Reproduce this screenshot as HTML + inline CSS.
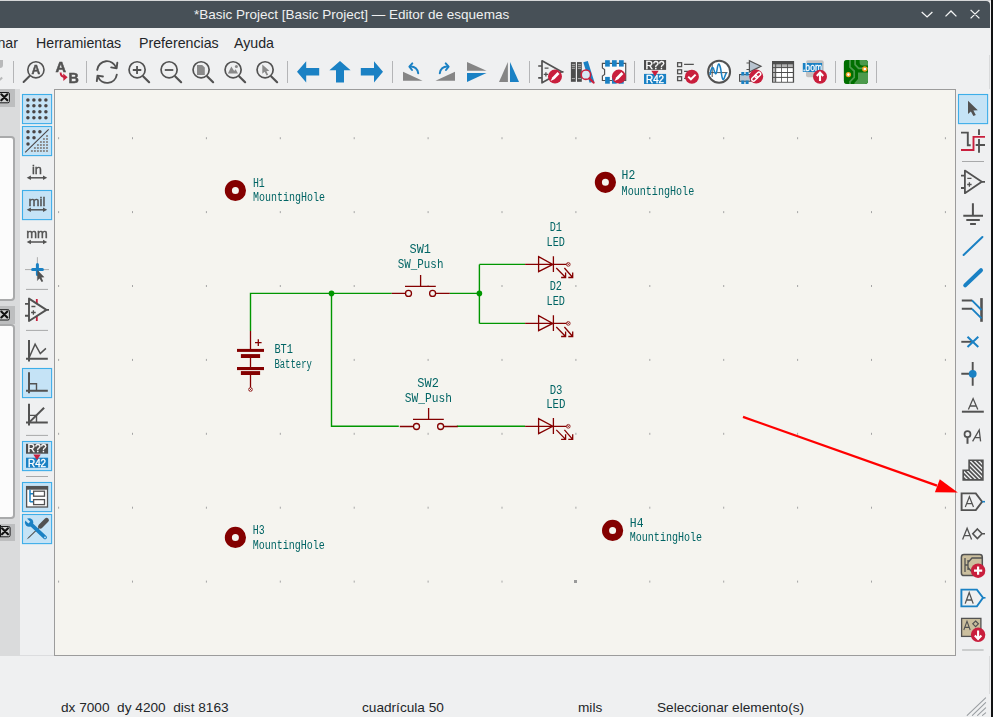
<!DOCTYPE html>
<html><head><meta charset="utf-8">
<style>
*{margin:0;padding:0;box-sizing:border-box}
html,body{width:993px;height:717px;overflow:hidden;background:#eff0f1;font-family:"Liberation Sans",sans-serif;color:#232629}
.a{position:absolute}
#title{left:0;top:1px;width:990px;height:27px;background:#475057;border-top-right-radius:4px}
#top0{left:0;top:0;width:993px;height:1px;background:#d6d7d8}
#rstrip{left:990.5px;top:0;width:3px;height:717px;background:#111213}
#ttext{left:194px;top:7px;color:#eff0f1;font-size:13.5px;white-space:nowrap}
.menu{top:35px;font-size:14.2px;white-space:nowrap}
.sep{width:1px;background:#b0b2b4}
.status{top:700px;font-size:13.65px;white-space:nowrap}
svg{position:absolute;overflow:visible}
.btn{position:absolute;width:30px;height:30px;background:#c7e3f6;border:1px solid #3daee9;border-radius:1px}
</style></head><body>
<div id="top0" class="a"></div>
<div id="title" class="a"></div>
<div id="ttext" class="a">*Basic Project [Basic Project] — Editor de esquemas</div>
<div id="rstrip" class="a"></div>

<!-- menu -->
<div class="a menu" style="left:-80px;width:98px;text-align:right">Inspeccionar</div>
<div class="a menu" style="left:36px">Herramientas</div>
<div class="a menu" style="left:139px">Preferencias</div>
<div class="a menu" style="left:234px">Ayuda</div>

<!-- left panel -->
<div class="a" style="left:0;top:89px;width:20px;height:567px;background:#dadbdc"></div>
<div class="a" style="left:0;top:89px;width:15px;height:18px;background:#bdbebf"></div>
<div class="a" style="left:0;top:306px;width:15px;height:18px;background:#bdbebf"></div>
<div class="a" style="left:0;top:524px;width:15px;height:17px;background:#bdbebf"></div>
<div class="a" style="left:-4px;top:136px;width:19px;height:165px;background:#fcfcfc;border:2px solid #a9aaab;border-left:none;border-radius:0 4px 4px 0"></div>
<div class="a" style="left:-4px;top:324px;width:19px;height:195px;background:#fcfcfc;border:2px solid #a9aaab;border-left:none;border-radius:0 4px 4px 0"></div>

<!-- canvas -->
<div id="canvas" class="a" style="left:54px;top:89px;width:902px;height:567px;background:#f5f4ef;border:1px solid #9c9c9c"></div>

<!-- status -->
<div class="a" style="left:20px;top:655px;width:34px;height:1px;background:#dcdddf"></div>
<div class="a status" style="left:61px">dx 7000&nbsp; dy 4200&nbsp; dist 8163</div>
<div class="a status" style="left:362px">cuadrícula 50</div>
<div class="a status" style="left:578px">mils</div>
<div class="a status" style="left:657px">Seleccionar elemento(s)</div>

<!--SVG--><svg class="a" style="left:0;top:0;will-change:transform" width="993" height="717" viewBox="0 0 993 717">
<clipPath id="cv"><rect x="55" y="90" width="900" height="565"/></clipPath>
<path d="M-1,59.9 H3 V65 Q3,67.9 0,67.9 H-1 Z" fill="#b8b9ba"/><path d="M-1,80.5 L2.2,77.5" stroke="#b8b9ba" stroke-width="2"/>
<rect x="13.0" y="61" width="1" height="22" fill="#b4b5b7"/>
<rect x="86.0" y="61" width="1" height="22" fill="#b4b5b7"/>
<rect x="287.0" y="61" width="1" height="22" fill="#b4b5b7"/>
<rect x="392.0" y="61" width="1" height="22" fill="#b4b5b7"/>
<rect x="529.0" y="61" width="1" height="22" fill="#b4b5b7"/>
<rect x="634.0" y="61" width="1" height="22" fill="#b4b5b7"/>
<rect x="835.0" y="61" width="1" height="22" fill="#b4b5b7"/>
<rect x="876.0" y="61" width="1" height="22" fill="#b4b5b7"/>
<circle cx="35.9" cy="69.8" r="8.1" fill="none" stroke="#525252" stroke-width="1.6"/>
<line x1="23.6" y1="82" x2="29.6" y2="76" stroke="#525252" stroke-width="2" stroke-linecap="round"/>
<text x="31.5" y="73.9" font-size="12" font-weight="bold" fill="#525252" stroke="#525252" stroke-width="0.5" font-family="Liberation Sans">A</text>
<text x="55.4" y="72.2" font-size="14.6" font-weight="bold" fill="#525252" stroke="#525252" stroke-width="0.5" font-family="Liberation Sans">A</text>
<text x="68.6" y="82.7" font-size="14.3" font-weight="bold" fill="#525252" stroke="#525252" stroke-width="0.5" font-family="Liberation Sans">B</text>
<path d="M60.6,72.6 Q60.6,76.8 65,77.2" fill="none" stroke="#c91f3d" stroke-width="1.9"/>
<path d="M63.2,73.6 L67.6,77.3 L63.4,81 Z" fill="#c91f3d"/>
<path d="M97.2,69.8 A9.8,9.8 0 0 1 116.2,67.8" fill="none" stroke="#525252" stroke-width="1.9" stroke-linecap="round"/>
<path d="M111.2,67.4 L116.6,68.4 L117.3,62.8" fill="none" stroke="#525252" stroke-width="1.9" stroke-linecap="round" stroke-linejoin="round"/>
<path d="M116.8,74.6 A9.8,9.8 0 0 1 97.9,76.4" fill="none" stroke="#525252" stroke-width="1.9" stroke-linecap="round"/>
<path d="M102.9,76.5 L97.5,75.6 L96.8,81.1" fill="none" stroke="#525252" stroke-width="1.9" stroke-linecap="round" stroke-linejoin="round"/>
<circle cx="137.1" cy="69.8" r="8.05" fill="none" stroke="#525252" stroke-width="1.7"/><line x1="143.29999999999998" y1="76.5" x2="149.1" y2="82.2" stroke="#525252" stroke-width="2.2" stroke-linecap="round"/><path d="M132.8,70 H141.3 M137.05,66 V74" stroke="#525252" stroke-width="1.8"/>
<circle cx="169.1" cy="69.8" r="8.05" fill="none" stroke="#525252" stroke-width="1.7"/><line x1="175.29999999999998" y1="76.5" x2="181.1" y2="82.2" stroke="#525252" stroke-width="2.2" stroke-linecap="round"/><path d="M164.8,70 H173.3" stroke="#525252" stroke-width="1.8"/>
<circle cx="201.1" cy="69.8" r="8.05" fill="none" stroke="#525252" stroke-width="1.7"/><line x1="207.29999999999998" y1="76.5" x2="213.1" y2="82.2" stroke="#525252" stroke-width="2.2" stroke-linecap="round"/><path d="M197,65 H202.2 L204.8,67.6 V75 H197 Z" fill="#8a8a8a"/>
<circle cx="233.1" cy="69.8" r="8.05" fill="none" stroke="#525252" stroke-width="1.7"/><line x1="239.29999999999998" y1="76.5" x2="245.1" y2="82.2" stroke="#525252" stroke-width="2.2" stroke-linecap="round"/><path d="M227.9,73.4 L231.3,66.6 L234.2,71 L235.6,69.3 L238,73.4 Z" fill="#8a8a8a"/><circle cx="236.4" cy="66.6" r="1.5" fill="#8a8a8a"/>
<circle cx="265.1" cy="69.8" r="8.05" fill="none" stroke="#525252" stroke-width="1.7"/><line x1="271.3" y1="76.5" x2="277.1" y2="82.2" stroke="#525252" stroke-width="2.2" stroke-linecap="round"/><path d="M262.3,64.6 L262.3,73.8 L264.6,71.8 L266.6,75.6 L268.2,74.8 L266.4,71.2 L269.3,70.7 Z" fill="#8a8a8a"/>
<path d="M297,71.8 L306.2,61.3 V68 H319.2 V75.5 H306.2 V82.4 Z" fill="#1a81c4"/>
<path d="M340,61 L350.6,70.2 H344 V82.6 H336 V70.2 H329.4 Z" fill="#1a81c4"/>
<path d="M383,71.8 L374,61.3 V68 H360.8 V75.5 H374 V82.4 Z" fill="#1a81c4"/>
<path d="M403,71.8 V80.8 H422.5 Z" fill="#858585"/>
<path d="M418.2,73.3 A7.2,7.2 0 0 0 410.6,66.5" fill="none" stroke="#1a81c4" stroke-width="2" stroke-linecap="round"/><path d="M412.3,63.4 L409.4,66.6 L412,70" fill="none" stroke="#1a81c4" stroke-width="2" stroke-linecap="round" stroke-linejoin="round"/>
<path d="M455,71.8 V80.8 H435.5 Z" fill="#858585"/>
<path d="M439.8,73.3 A7.2,7.2 0 0 1 447.4,66.5" fill="none" stroke="#1a81c4" stroke-width="2" stroke-linecap="round"/><path d="M445.7,63.4 L448.6,66.6 L446,70" fill="none" stroke="#1a81c4" stroke-width="2" stroke-linecap="round" stroke-linejoin="round"/>
<path d="M467,61.9 V70.8 H486.5 Z" fill="#858585"/><path d="M467,73.1 H486.5 L467,81.9 Z" fill="#1a81c4"/>
<path d="M499,81.9 L507.9,62.1 V81.9 Z" fill="#858585"/><path d="M510,62.1 V81.9 H519 Z" fill="#1a81c4"/>
<path d="M538.2,66 H542 M538.2,77.9 H542 M561.7,71.8 H563.5" stroke="#525252" stroke-width="1.7"/>
<path d="M542,60.8 V82.8 L561.7,71.8 Z" fill="none" stroke="#525252" stroke-width="1.7" stroke-linejoin="round"/>
<path d="M544.6,68.2 H548.5 M543.7,74.4 H548.1 M545.9,72.2 V76.6" stroke="#525252" stroke-width="1.3"/>
<circle cx="555" cy="76.6" r="7" fill="#c91f3d"/><path d="M550.60,81.00 L552.40,77.20 L557.50,72.10 L559.50,74.10 L554.40,79.20 Z" fill="#fff"/>
<rect x="570.9" y="62.1" width="4.9" height="19.7" fill="#4d4d4d"/><rect x="577" y="62.1" width="4.8" height="19.7" fill="#4d4d4d"/>
<path d="M571.8,64.4 H575 M571.8,66.3 H575 M571.8,68.3 H575 M571.8,78.6 H575 M577.9,64.4 H581 M577.9,66.3 H581 M577.9,68.3 H581 M577.9,78.6 H581" stroke="#c8c8c8" stroke-width="0.8"/>
<path d="M583.3,62.2 L587.8,61 L594.2,81.6 L589.6,82.8 Z" fill="#1a81c4"/>
<circle cx="585.9" cy="74.7" r="4.7" fill="#d6e8f4" stroke="#c91f3d" stroke-width="1.6"/><line x1="589.5" y1="78.4" x2="593.6" y2="82.6" stroke="#c91f3d" stroke-width="2.2" stroke-linecap="round"/>
<path d="M602.4,63.4 H625.7 V80.5 H602.4 V76 L604.6,74.5 V69.5 L602.4,68 Z" fill="#fafafa" stroke="#525252" stroke-width="1.2"/>
<rect x="605.1" y="60.2" width="4.7" height="6.4" fill="#1a81c4"/><rect x="605.1" y="76.9" width="4.7" height="6.8" fill="#1a81c4"/>
<rect x="612" y="60.2" width="4.7" height="6.4" fill="#1a81c4"/><rect x="612" y="76.9" width="4.7" height="6.8" fill="#1a81c4"/>
<rect x="619" y="60.2" width="4.7" height="6.4" fill="#1a81c4"/><rect x="619" y="76.9" width="4.7" height="6.8" fill="#1a81c4"/>
<circle cx="618.9" cy="76.6" r="7" fill="#c91f3d"/><path d="M614.50,81.00 L616.30,77.20 L621.40,72.10 L623.40,74.10 L618.30,79.20 Z" fill="#fff"/>
<rect x="644" y="60" width="22.1" height="9.9" fill="#4d4d4d"/><rect x="644" y="73.9" width="22.1" height="10.1" fill="#1a81c4"/><text x="655.05" y="68.6" font-size="11.4" fill="#fff" stroke="#fff" stroke-width="0.35" text-anchor="middle" font-family="Liberation Sans" textLength="19" lengthAdjust="spacingAndGlyphs">R??</text><text x="655.05" y="82.7" font-size="11.4" fill="#fff" stroke="#fff" stroke-width="0.35" text-anchor="middle" font-family="Liberation Sans" textLength="18" lengthAdjust="spacingAndGlyphs">R42</text><path d="M651.3,70.8 H658.7 L655,76.3 Z" fill="#c91f3d"/>
<rect x="677.6" y="62.7" width="4" height="3.9" fill="none" stroke="#525252" stroke-width="1.3"/>
<rect x="677.6" y="69.8" width="4" height="3.9" fill="none" stroke="#525252" stroke-width="1.3"/>
<rect x="677.6" y="76.69999999999999" width="4" height="3.9" fill="none" stroke="#525252" stroke-width="1.3"/>
<path d="M684.1,64.4 H693.8 M684.1,71.4 H690 M684.1,78.4 H688" stroke="#525252" stroke-width="1.3"/>
<circle cx="691.9" cy="76.7" r="7" fill="#c91f3d"/><path d="M688.2,76.6 L690.9,79.3 L695.6,74.6" fill="none" stroke="#fff" stroke-width="2"/>
<circle cx="719.1" cy="71.8" r="11" fill="#fdfdfd" stroke="#525252" stroke-width="2"/>
<path d="M709.5,72.6 H727.5 M712.2,63.5 V77" stroke="#525252" stroke-width="1"/>
<path d="M710,75 C711,68 713,65 714,70 C715,74 716,76 717,70 C718,63 719,62 720.5,68 C721.5,73 722,80 723.4,79.6 C724.6,79 725,74 726.6,72.6" fill="none" stroke="#1a81c4" stroke-width="1.5"/>
<path d="M749.4,60.6 V72 L761,66.3 Z" fill="#b7c3cf" stroke="#525252" stroke-width="1.2"/><path d="M746.5,63 H749.4 M746.5,69.5 H749.4" stroke="#525252" stroke-width="1.1"/>
<rect x="739.5" y="74.5" width="11" height="6.8" fill="#b7c3cf" stroke="#525252" stroke-width="1"/>
<rect x="741.3" y="72" width="3" height="3.5" fill="#1a81c4"/><rect x="741.3" y="80.5" width="3" height="3.5" fill="#1a81c4"/>
<rect x="745.6" y="72" width="3" height="3.5" fill="#1a81c4"/><rect x="745.6" y="80.5" width="3" height="3.5" fill="#1a81c4"/>
<circle cx="756.2" cy="76.6" r="7" fill="#c91f3d"/><g transform="rotate(-45 756.2 76.6)"><rect x="750.6" y="74.8" width="6.6" height="3.6" rx="1.8" fill="none" stroke="#fff" stroke-width="1.4"/><rect x="755.2" y="74.8" width="6.6" height="3.6" rx="1.8" fill="none" stroke="#fff" stroke-width="1.4"/></g>
<rect x="772" y="61" width="22.1" height="21.7" fill="#4d4d4d"/>
<rect x="773" y="64.3" width="2.2" height="2.8" fill="#b3b3b3"/>
<rect x="773" y="68.1" width="2.2" height="3.9" fill="#b3b3b3"/>
<rect x="773" y="73" width="2.2" height="3.9" fill="#b3b3b3"/>
<rect x="773" y="77.9" width="2.2" height="3.9" fill="#b3b3b3"/>
<rect x="776.2" y="64.3" width="5" height="2.8" fill="#b3b3b3"/>
<rect x="776.2" y="68.1" width="5" height="3.9" fill="#fff"/>
<rect x="776.2" y="73" width="5" height="3.9" fill="#fff"/>
<rect x="776.2" y="77.9" width="5" height="3.9" fill="#fff"/>
<rect x="782" y="64.3" width="5" height="2.8" fill="#b3b3b3"/>
<rect x="782" y="68.1" width="5" height="3.9" fill="#fff"/>
<rect x="782" y="73" width="5" height="3.9" fill="#fff"/>
<rect x="782" y="77.9" width="5" height="3.9" fill="#fff"/>
<rect x="787.8" y="64.3" width="5" height="2.8" fill="#b3b3b3"/>
<rect x="787.8" y="68.1" width="5" height="3.9" fill="#fff"/>
<rect x="787.8" y="73" width="5" height="3.9" fill="#fff"/>
<rect x="787.8" y="77.9" width="5" height="3.9" fill="#fff"/>
<rect x="806" y="60.2" width="17.7" height="17.1" rx="2" fill="#c2c2c2"/>
<rect x="802.8" y="63" width="19.3" height="9" fill="#1a81c4"/><text x="803" y="71.4" font-size="11.6" fill="#fff" stroke="#fff" stroke-width="0.3" font-family="Liberation Sans" textLength="19" lengthAdjust="spacingAndGlyphs">.bom</text>
<circle cx="820" cy="76.7" r="7" fill="#c91f3d"/><path d="M820,81 V72.8 M816.8,76 L820,72.6 L823.2,76" fill="none" stroke="#fff" stroke-width="2.1"/>
<rect x="843.9" y="59.9" width="24.1" height="24.1" rx="3.2" fill="#4e9a4e"/>
<clipPath id="pcb"><rect x="843.9" y="59.9" width="24.1" height="24.1" rx="3.2"/></clipPath>
<g clip-path="url(#pcb)"><rect x="843" y="59" width="26" height="26" fill="#006f00"/><path d="M859.6,59 H869 V65.6 H862.6 Q859.6,65.6 859.6,62.6 Z" fill="#4c9a4c"/><path d="M858,72.6 H869 V85 H854.4 V83 L858,79 Z" fill="#4c9a4c"/><path d="M850,59 V67.2 L854.2,71 V77.4 L850,81.6 V85 M855.1,59 V64.6 L858.6,68.3 H869" fill="none" stroke="#4c9a4c" stroke-width="1.7"/></g>
<circle cx="848.4" cy="74.6" r="2" fill="#fff" stroke="#f0a020" stroke-width="1.4"/><circle cx="864.8" cy="69" r="2" fill="#fff" stroke="#f0a020" stroke-width="1.4"/>
<rect x="22.5" y="94.5" width="29.1" height="29.1" fill="#c5e3f6" stroke="#3daee9" stroke-width="1.1"/>
<circle cx="27.9" cy="99.9" r="1.75" fill="#4a4545"/>
<circle cx="27.9" cy="105.8" r="1.75" fill="#4a4545"/>
<circle cx="27.9" cy="111.8" r="1.75" fill="#4a4545"/>
<circle cx="27.9" cy="117.8" r="1.75" fill="#4a4545"/>
<circle cx="33.9" cy="99.9" r="1.75" fill="#4a4545"/>
<circle cx="33.9" cy="105.8" r="1.75" fill="#4a4545"/>
<circle cx="33.9" cy="111.8" r="1.75" fill="#4a4545"/>
<circle cx="33.9" cy="117.8" r="1.75" fill="#4a4545"/>
<circle cx="39.9" cy="99.9" r="1.75" fill="#4a4545"/>
<circle cx="39.9" cy="105.8" r="1.75" fill="#4a4545"/>
<circle cx="39.9" cy="111.8" r="1.75" fill="#4a4545"/>
<circle cx="39.9" cy="117.8" r="1.75" fill="#4a4545"/>
<circle cx="45.9" cy="99.9" r="1.75" fill="#4a4545"/>
<circle cx="45.9" cy="105.8" r="1.75" fill="#4a4545"/>
<circle cx="45.9" cy="111.8" r="1.75" fill="#4a4545"/>
<circle cx="45.9" cy="117.8" r="1.75" fill="#4a4545"/>
<rect x="22.5" y="126.5" width="29.1" height="29.1" fill="#c5e3f6" stroke="#3daee9" stroke-width="1.1"/>
<circle cx="28" cy="131.8" r="1.75" fill="#4a4545"/>
<circle cx="34" cy="131.8" r="1.75" fill="#4a4545"/>
<circle cx="39.9" cy="131.8" r="1.75" fill="#4a4545"/>
<circle cx="28" cy="137.8" r="1.75" fill="#4a4545"/>
<circle cx="34" cy="137.8" r="1.75" fill="#4a4545"/>
<circle cx="28" cy="143.9" r="1.75" fill="#4a4545"/>
<line x1="25.2" y1="152.4" x2="48.7" y2="129.3" stroke="#4a4545" stroke-width="1.1"/>
<rect x="30.95" y="150.05" width="1.9" height="1.9" fill="#888"/>
<rect x="33.949999999999996" y="150.05" width="1.9" height="1.9" fill="#888"/>
<rect x="36.949999999999996" y="150.05" width="1.9" height="1.9" fill="#888"/>
<rect x="39.949999999999996" y="150.05" width="1.9" height="1.9" fill="#888"/>
<rect x="42.949999999999996" y="150.05" width="1.9" height="1.9" fill="#888"/>
<rect x="46.05" y="150.05" width="1.9" height="1.9" fill="#888"/>
<rect x="33.949999999999996" y="147.05" width="1.9" height="1.9" fill="#888"/>
<rect x="36.949999999999996" y="147.05" width="1.9" height="1.9" fill="#888"/>
<rect x="39.949999999999996" y="147.05" width="1.9" height="1.9" fill="#888"/>
<rect x="42.949999999999996" y="147.05" width="1.9" height="1.9" fill="#888"/>
<rect x="46.05" y="147.05" width="1.9" height="1.9" fill="#888"/>
<rect x="36.949999999999996" y="144.05" width="1.9" height="1.9" fill="#888"/>
<rect x="39.949999999999996" y="144.05" width="1.9" height="1.9" fill="#888"/>
<rect x="42.949999999999996" y="144.05" width="1.9" height="1.9" fill="#888"/>
<rect x="46.05" y="144.05" width="1.9" height="1.9" fill="#888"/>
<rect x="39.949999999999996" y="141.05" width="1.9" height="1.9" fill="#888"/>
<rect x="42.949999999999996" y="141.05" width="1.9" height="1.9" fill="#888"/>
<rect x="46.05" y="141.05" width="1.9" height="1.9" fill="#888"/>
<rect x="42.949999999999996" y="138.05" width="1.9" height="1.9" fill="#888"/>
<rect x="46.05" y="138.05" width="1.9" height="1.9" fill="#888"/>
<rect x="46.05" y="135.05" width="1.9" height="1.9" fill="#888"/>
<text x="32" y="174.1" font-size="12.8" fill="#525252" stroke="#525252" stroke-width="0.4" font-family="Liberation Sans" textLength="10" lengthAdjust="spacingAndGlyphs">in</text><path d="M29.7,177.8 H44.2" stroke="#525252" stroke-width="1.5"/><path d="M26.7,177.8 L30.9,175.5 V180.10000000000002 Z M47.2,177.8 L43.0,175.5 V180.10000000000002 Z" fill="#525252"/>
<rect x="22.5" y="190.5" width="29.1" height="29.1" fill="#c5e3f6" stroke="#3daee9" stroke-width="1.1"/>
<text x="28.5" y="205.8" font-size="12.8" fill="#525252" stroke="#525252" stroke-width="0.4" font-family="Liberation Sans" textLength="16.9" lengthAdjust="spacingAndGlyphs">mil</text><path d="M29.7,209.8 H44.2" stroke="#525252" stroke-width="1.5"/><path d="M26.7,209.8 L30.9,207.5 V212.10000000000002 Z M47.2,209.8 L43.0,207.5 V212.10000000000002 Z" fill="#525252"/>
<text x="26.3" y="237.7" font-size="12.8" fill="#525252" stroke="#525252" stroke-width="0.4" font-family="Liberation Sans" textLength="21.5" lengthAdjust="spacingAndGlyphs">mm</text><path d="M29.7,242 H44.2" stroke="#525252" stroke-width="1.5"/><path d="M26.7,242 L30.9,239.7 V244.3 Z M47.2,242 L43.0,239.7 V244.3 Z" fill="#525252"/>
<path d="M25,269.6 H49 M37.4,257.2 V281" stroke="#9a9a9a" stroke-width="0.8"/>
<path d="M32.6,269.6 H42.4 M37.4,264.6 V274.6" stroke="#1a81c4" stroke-width="3" stroke-linecap="round"/>
<path d="M37.4,270 V280.4 L39.6,278.4 L41.6,282 L43.2,281.2 L41.4,277.6 L44.4,277.2 Z" fill="#525252"/>
<rect x="26" y="288.9" width="22" height="1" fill="#a8a9aa"/>
<path d="M36.8,299 V321" stroke="#c91f3d" stroke-width="1.8"/>
<path d="M25,303.9 H29 M25,315.7 H29 M46.4,309.9 H49" stroke="#525252" stroke-width="1.9"/>
<path d="M29,298.6 V321 L46.4,309.9 Z" fill="#eff0f1" stroke="#525252" stroke-width="1.9" stroke-linejoin="round"/>
<path d="M31.4,306.5 H35.4 M31.1,312.5 H35.7 M33.4,310.2 V314.8" stroke="#525252" stroke-width="1.3"/>
<rect x="26" y="329.9" width="22" height="1" fill="#a8a9aa"/>
<path d="M29,340 V361.5 M26,358.8 H47.8" stroke="#525252" stroke-width="2"/><path d="M29,358 L35.1,344.2 L40.3,353.5 L45.9,348.4" fill="none" stroke="#525252" stroke-width="1.5"/>
<rect x="22.5" y="368.5" width="29.1" height="29.1" fill="#c5e3f6" stroke="#3daee9" stroke-width="1.1"/>
<path d="M29,372.3 V393.2 M26,390.8 H47.8" stroke="#525252" stroke-width="2"/><path d="M29,383.7 H36.5 V390.8" fill="none" stroke="#525252" stroke-width="1.4"/>
<path d="M29,403.8 V425.6 M26,422.6 H47.8" stroke="#525252" stroke-width="2"/><path d="M29,415.4 H36.5 V422.6" fill="none" stroke="#525252" stroke-width="1.4"/><path d="M29,422.6 L44.1,407.8" stroke="#525252" stroke-width="2"/>
<rect x="26" y="434.9" width="22" height="1" fill="#a8a9aa"/>
<rect x="22.5" y="441.5" width="29.1" height="29.1" fill="#c5e3f6" stroke="#3daee9" stroke-width="1.1"/>
<rect x="26" y="443.8" width="22.1" height="9.9" fill="#4d4d4d"/><rect x="26" y="457.7" width="22.1" height="10.1" fill="#1a81c4"/><text x="37.05" y="452.40000000000003" font-size="11.4" fill="#fff" stroke="#fff" stroke-width="0.35" text-anchor="middle" font-family="Liberation Sans" textLength="19" lengthAdjust="spacingAndGlyphs">R??</text><text x="37.05" y="466.5" font-size="11.4" fill="#fff" stroke="#fff" stroke-width="0.35" text-anchor="middle" font-family="Liberation Sans" textLength="18" lengthAdjust="spacingAndGlyphs">R42</text><path d="M33.3,454.6 H40.7 L37,460.1 Z" fill="#c91f3d"/>
<rect x="26" y="476" width="22" height="1" fill="#a8a9aa"/>
<rect x="22.5" y="482.5" width="29.1" height="29.1" fill="#c5e3f6" stroke="#3daee9" stroke-width="1.1"/>
<rect x="26.6" y="486.6" width="20.9" height="20.4" fill="#fff" stroke="#525252" stroke-width="1.3"/><rect x="26" y="486" width="22.1" height="3.7" fill="#525252"/>
<path d="M30,489.7 V502.1 M30,493.8 H33.6 M30,501.7 H33.6" fill="none" stroke="#1a81c4" stroke-width="1.5"/>
<rect x="33.6" y="491.2" width="10.9" height="5" fill="#fff" stroke="#525252" stroke-width="1.3"/><rect x="33.6" y="499.6" width="10.9" height="5" fill="#fff" stroke="#525252" stroke-width="1.3"/>
<rect x="22.5" y="514.5" width="29.1" height="29.1" fill="#c5e3f6" stroke="#3daee9" stroke-width="1.1"/>
<path d="M26.6,539.4 L28.5,537 L40.5,525.5 L41,526.4 L29,538 Z" fill="#525252"/><path d="M40.4,526.3 L46.6,520.1" stroke="#525252" stroke-width="4.6" stroke-linecap="round"/>
<path d="M29.5,522.8 L45,537.3" stroke="#1a81c4" stroke-width="3.9" stroke-linecap="round"/><circle cx="29.1" cy="522.5" r="4.2" fill="#1a81c4"/><path d="M29.3,522.7 L24.6,518" stroke="#c5e3f6" stroke-width="2.6"/>
<circle cx="45" cy="537.4" r="0.9" fill="#c5e3f6"/>
<rect x="958.5" y="94.5" width="29.1" height="29.1" fill="#c5e3f6" stroke="#3daee9" stroke-width="1.1"/>
<path d="M968,100.8 V114 L970.9,111.6 L973.4,116.1 L975.8,115 L973.4,110.5 L977.8,110.3 Z" fill="#525252"/>
<path d="M961,132.6 H967.8 V145.3 H970.7" fill="none" stroke="#525252" stroke-width="1.9"/>
<path d="M979,129.3 V152.8 M975.4,145 H985" stroke="#525252" stroke-width="1.9"/>
<path d="M961,150 H973.5 V136.9 H985" fill="none" stroke="#eff0f1" stroke-width="4"/><path d="M961,150 H973.5 V136.9 H985" fill="none" stroke="#c91f3d" stroke-width="1.9"/>
<rect x="962" y="161" width="22" height="1" fill="#a8a9aa"/>
<path d="M961,175.7 H965 M961,188 H965 M981.8,181.8 H985" stroke="#525252" stroke-width="1.8"/>
<path d="M964.9,170.6 V193.2 L981.8,181.8 Z" fill="none" stroke="#525252" stroke-width="1.8" stroke-linejoin="round"/>
<path d="M967.3,178.4 H971.5 M967.2,184.5 H971.6 M969.4,182.3 V186.7" stroke="#525252" stroke-width="1.3"/>
<path d="M972.9,203.2 V215.8 M963.3,215.8 H983 M966.3,219.9 H979.8 M970.1,223.9 H975.9" stroke="#525252" stroke-width="2"/>
<line x1="963.6" y1="255" x2="982.4" y2="237" stroke="#1a81c4" stroke-width="2" stroke-linecap="round"/>
<line x1="965.2" y1="285.4" x2="981" y2="270.2" stroke="#1a81c4" stroke-width="4" stroke-linecap="round"/>
<path d="M981.5,298.1 V321.8" stroke="#525252" stroke-width="2.6"/><path d="M961.8,300.4 H972.2 M961.8,308.8 H972.2" stroke="#525252" stroke-width="2"/>
<path d="M972,300.4 L981.5,310 M972,308.8 L981.5,318.4" stroke="#1a81c4" stroke-width="1.9"/>
<path d="M961.3,341.8 H972.7" stroke="#525252" stroke-width="1.9"/><path d="M967.5,336.8 L978.3,347 M967.5,347 L978.3,336.8" stroke="#1a81c4" stroke-width="2"/>
<path d="M961.3,373.8 H972.7 M972.7,362.1 V385.8" stroke="#525252" stroke-width="1.9"/><circle cx="972.7" cy="373.8" r="3.9" fill="#1a81c4"/>
<path d="M968.4,409.4 L973.1,398.6 L977.8,409.4 M969.9,406 H976.3" fill="none" stroke="#525252" stroke-width="1.3"/><path d="M961.9,411.7 H983.8" stroke="#525252" stroke-width="2"/>
<circle cx="967.5" cy="434.2" r="3" fill="none" stroke="#525252" stroke-width="1.7"/><path d="M967.5,437.2 V443.8" stroke="#525252" stroke-width="2"/>
<path d="M972.6,441.4 L979.2,430 L980.6,441.4 M974.8,437.6 H980.2" fill="none" stroke="#525252" stroke-width="1.3"/>
<clipPath id="hatch"><path d="M963.2,470.3 H969.1 V460.2 H982.9 V479.9 H963.2 Z"/></clipPath>
<g clip-path="url(#hatch)"><path d="M916.3,452 l32,32 M920.6,452 l32,32 M924.9,452 l32,32 M929.2,452 l32,32 M933.5,452 l32,32 M937.8,452 l32,32 M942.1,452 l32,32 M946.4,452 l32,32 M950.7,452 l32,32 M955.0,452 l32,32 M959.3,452 l32,32 M963.6,452 l32,32 M967.9,452 l32,32 M972.2,452 l32,32 M976.5,452 l32,32 M980.8,452 l32,32 M985.1,452 l32,32 " stroke="#525252" stroke-width="1.7"/></g>
<path d="M963.2,470.3 H969.1 V460.2 H982.9 V479.9 H963.2 Z" fill="none" stroke="#525252" stroke-width="1.6"/>
<path d="M961.6,493.4 H975.8 L982.1,501.7 L975.8,510.1 H961.6 Z" fill="none" stroke="#525252" stroke-width="1.9"/><path d="M982.1,501.7 H985" stroke="#1a81c4" stroke-width="1.6"/>
<path d="M965.3,507 L969.4,496.7 L973.5,507 M966.6,503.6 H972.2" fill="none" stroke="#525252" stroke-width="1.2"/>
<path d="M962.6,539.6 L967.1,528.2 L971.6,539.6 M964.1,535.6 H970.1" fill="none" stroke="#525252" stroke-width="1.3"/><path d="M977.4,529 L982,533.8 L977.4,538.6 L972.8,533.8 Z M982,533.8 H985" fill="none" stroke="#525252" stroke-width="1.6"/>
<rect x="961.4" y="554.6" width="20.9" height="20.9" rx="2.6" fill="#cbbf9e" stroke="#525252" stroke-width="1.5"/>
<path d="M965,558 V572 M965,565 H968 M968,560 V570 M968,562.5 L972,558 H982 M968,567.5 L972,572" fill="none" stroke="#525252" stroke-width="1.3"/>
<circle cx="978.1" cy="570.7" r="7.2" fill="#c91f3d"/><path d="M978.1,566.6 V574.8 M974,570.7 H982.2" stroke="#fff" stroke-width="2.2"/>
<path d="M961.4,589.6 H976.9 L983,597.8 L976.9,606.4 H961.4 Z" fill="none" stroke="#1a81c4" stroke-width="1.9"/><path d="M983,597.8 H985.5" stroke="#1a81c4" stroke-width="1.6"/>
<path d="M965.2,603.6 L969.2,592.6 L973.2,603.6 M966.6,600 H971.8" fill="none" stroke="#525252" stroke-width="1.3"/>
<rect x="961.6" y="618.4" width="19.3" height="18" fill="#cbbf9e" stroke="#525252" stroke-width="1.3"/>
<path d="M963.8,630 L967,621.4 L970.2,630 M964.8,627.4 H969.2" fill="none" stroke="#525252" stroke-width="1.1"/><path d="M975.6,621 L978.4,623.8 L975.6,626.6 L972.8,623.8 Z" fill="none" stroke="#525252" stroke-width="1.2"/>
<circle cx="978.1" cy="634.8" r="7.2" fill="#c91f3d"/><path d="M978.1,630.6 V638.8 M974.8,635.6 L978.1,639 L981.4,635.6" fill="none" stroke="#fff" stroke-width="2.1"/>
<rect x="962.1" y="649.5" width="21.5" height="1" fill="#a8a9aa"/>
<rect x="-6" y="92.5" width="15.4" height="10.3" rx="1.5" fill="#cfd0d0" stroke="#1b1c1d" stroke-width="1"/><path d="M1.2999999999999998,94.3 L7.3,100.3 M1.2999999999999998,100.3 L7.3,94.3" stroke="#111" stroke-width="2.1" stroke-linecap="round"/>
<rect x="-6" y="309.7" width="15.4" height="10.3" rx="1.5" fill="#cfd0d0" stroke="#1b1c1d" stroke-width="1"/><path d="M1.2999999999999998,311.5 L7.3,317.5 M1.2999999999999998,317.5 L7.3,311.5" stroke="#111" stroke-width="2.1" stroke-linecap="round"/>
<rect x="-5.3" y="526.5" width="15.4" height="10.3" rx="1.5" fill="#cfd0d0" stroke="#1b1c1d" stroke-width="1"/><path d="M2.0,528.3 L8.0,534.3 M2.0,534.3 L8.0,528.3" stroke="#111" stroke-width="2.1" stroke-linecap="round"/>
<rect x="0" y="525" width="1" height="12" fill="#1b1c1d"/>
<rect x="989" y="55" width="1" height="34" fill="#d9dadb"/><rect x="989" y="656" width="1" height="38" fill="#d9dadb"/>
<line x1="967.2" y1="715.4" x2="985.6" y2="697.8" stroke="#9a9ea2" stroke-width="1.1" stroke-linecap="round"/>
<line x1="972.4" y1="715.4" x2="985.6" y2="702.7" stroke="#9a9ea2" stroke-width="1.1" stroke-linecap="round"/>
<line x1="977.6" y1="715.4" x2="985.6" y2="707.9" stroke="#9a9ea2" stroke-width="1.1" stroke-linecap="round"/>
<line x1="982.5" y1="715.4" x2="985.6" y2="712.8" stroke="#9a9ea2" stroke-width="1.1" stroke-linecap="round"/>
<path d="M921.7,12 L927.1,16.9 L932.4,12 M945.5,16.4 L951,11 L956.4,16.4 M970.6,9.9 L979.4,18.4 M970.6,18.4 L979.4,9.9" fill="none" stroke="#f4f5f5" stroke-width="1.3"/>
<g clip-path="url(#cv)">
<rect x="58.1" y="137.2" width="1" height="2" fill="#a5a5a5"/>
<rect x="58.1" y="211.1" width="1" height="2" fill="#a5a5a5"/>
<rect x="58.1" y="285.0" width="1" height="2" fill="#a5a5a5"/>
<rect x="58.1" y="358.9" width="1" height="2" fill="#a5a5a5"/>
<rect x="58.1" y="432.8" width="1" height="2" fill="#a5a5a5"/>
<rect x="58.1" y="506.7" width="1" height="2" fill="#a5a5a5"/>
<rect x="58.1" y="580.6" width="1" height="2" fill="#a5a5a5"/>
<rect x="132.0" y="137.2" width="1" height="2" fill="#a5a5a5"/>
<rect x="132.0" y="211.1" width="1" height="2" fill="#a5a5a5"/>
<rect x="132.0" y="285.0" width="1" height="2" fill="#a5a5a5"/>
<rect x="132.0" y="358.9" width="1" height="2" fill="#a5a5a5"/>
<rect x="132.0" y="432.8" width="1" height="2" fill="#a5a5a5"/>
<rect x="132.0" y="506.7" width="1" height="2" fill="#a5a5a5"/>
<rect x="132.0" y="580.6" width="1" height="2" fill="#a5a5a5"/>
<rect x="205.9" y="137.2" width="1" height="2" fill="#a5a5a5"/>
<rect x="205.9" y="211.1" width="1" height="2" fill="#a5a5a5"/>
<rect x="205.9" y="285.0" width="1" height="2" fill="#a5a5a5"/>
<rect x="205.9" y="358.9" width="1" height="2" fill="#a5a5a5"/>
<rect x="205.9" y="432.8" width="1" height="2" fill="#a5a5a5"/>
<rect x="205.9" y="506.7" width="1" height="2" fill="#a5a5a5"/>
<rect x="205.9" y="580.6" width="1" height="2" fill="#a5a5a5"/>
<rect x="279.8" y="137.2" width="1" height="2" fill="#a5a5a5"/>
<rect x="279.8" y="211.1" width="1" height="2" fill="#a5a5a5"/>
<rect x="279.8" y="285.0" width="1" height="2" fill="#a5a5a5"/>
<rect x="279.8" y="358.9" width="1" height="2" fill="#a5a5a5"/>
<rect x="279.8" y="432.8" width="1" height="2" fill="#a5a5a5"/>
<rect x="279.8" y="506.7" width="1" height="2" fill="#a5a5a5"/>
<rect x="279.8" y="580.6" width="1" height="2" fill="#a5a5a5"/>
<rect x="353.7" y="137.2" width="1" height="2" fill="#a5a5a5"/>
<rect x="353.7" y="211.1" width="1" height="2" fill="#a5a5a5"/>
<rect x="353.7" y="285.0" width="1" height="2" fill="#a5a5a5"/>
<rect x="353.7" y="358.9" width="1" height="2" fill="#a5a5a5"/>
<rect x="353.7" y="432.8" width="1" height="2" fill="#a5a5a5"/>
<rect x="353.7" y="506.7" width="1" height="2" fill="#a5a5a5"/>
<rect x="353.7" y="580.6" width="1" height="2" fill="#a5a5a5"/>
<rect x="427.6" y="137.2" width="1" height="2" fill="#a5a5a5"/>
<rect x="427.6" y="211.1" width="1" height="2" fill="#a5a5a5"/>
<rect x="427.6" y="285.0" width="1" height="2" fill="#a5a5a5"/>
<rect x="427.6" y="358.9" width="1" height="2" fill="#a5a5a5"/>
<rect x="427.6" y="432.8" width="1" height="2" fill="#a5a5a5"/>
<rect x="427.6" y="506.7" width="1" height="2" fill="#a5a5a5"/>
<rect x="427.6" y="580.6" width="1" height="2" fill="#a5a5a5"/>
<rect x="501.5" y="137.2" width="1" height="2" fill="#a5a5a5"/>
<rect x="501.5" y="211.1" width="1" height="2" fill="#a5a5a5"/>
<rect x="501.5" y="285.0" width="1" height="2" fill="#a5a5a5"/>
<rect x="501.5" y="358.9" width="1" height="2" fill="#a5a5a5"/>
<rect x="501.5" y="432.8" width="1" height="2" fill="#a5a5a5"/>
<rect x="501.5" y="506.7" width="1" height="2" fill="#a5a5a5"/>
<rect x="501.5" y="580.6" width="1" height="2" fill="#a5a5a5"/>
<rect x="575.4" y="137.2" width="1" height="2" fill="#a5a5a5"/>
<rect x="575.4" y="211.1" width="1" height="2" fill="#a5a5a5"/>
<rect x="575.4" y="285.0" width="1" height="2" fill="#a5a5a5"/>
<rect x="575.4" y="358.9" width="1" height="2" fill="#a5a5a5"/>
<rect x="575.4" y="432.8" width="1" height="2" fill="#a5a5a5"/>
<rect x="575.4" y="506.7" width="1" height="2" fill="#a5a5a5"/>
<rect x="575.4" y="580.6" width="1" height="2" fill="#a5a5a5"/>
<rect x="649.3" y="137.2" width="1" height="2" fill="#a5a5a5"/>
<rect x="649.3" y="211.1" width="1" height="2" fill="#a5a5a5"/>
<rect x="649.3" y="285.0" width="1" height="2" fill="#a5a5a5"/>
<rect x="649.3" y="358.9" width="1" height="2" fill="#a5a5a5"/>
<rect x="649.3" y="432.8" width="1" height="2" fill="#a5a5a5"/>
<rect x="649.3" y="506.7" width="1" height="2" fill="#a5a5a5"/>
<rect x="649.3" y="580.6" width="1" height="2" fill="#a5a5a5"/>
<rect x="723.2" y="137.2" width="1" height="2" fill="#a5a5a5"/>
<rect x="723.2" y="211.1" width="1" height="2" fill="#a5a5a5"/>
<rect x="723.2" y="285.0" width="1" height="2" fill="#a5a5a5"/>
<rect x="723.2" y="358.9" width="1" height="2" fill="#a5a5a5"/>
<rect x="723.2" y="432.8" width="1" height="2" fill="#a5a5a5"/>
<rect x="723.2" y="506.7" width="1" height="2" fill="#a5a5a5"/>
<rect x="723.2" y="580.6" width="1" height="2" fill="#a5a5a5"/>
<rect x="797.1" y="137.2" width="1" height="2" fill="#a5a5a5"/>
<rect x="797.1" y="211.1" width="1" height="2" fill="#a5a5a5"/>
<rect x="797.1" y="285.0" width="1" height="2" fill="#a5a5a5"/>
<rect x="797.1" y="358.9" width="1" height="2" fill="#a5a5a5"/>
<rect x="797.1" y="432.8" width="1" height="2" fill="#a5a5a5"/>
<rect x="797.1" y="506.7" width="1" height="2" fill="#a5a5a5"/>
<rect x="797.1" y="580.6" width="1" height="2" fill="#a5a5a5"/>
<rect x="871.0" y="137.2" width="1" height="2" fill="#a5a5a5"/>
<rect x="871.0" y="211.1" width="1" height="2" fill="#a5a5a5"/>
<rect x="871.0" y="285.0" width="1" height="2" fill="#a5a5a5"/>
<rect x="871.0" y="358.9" width="1" height="2" fill="#a5a5a5"/>
<rect x="871.0" y="432.8" width="1" height="2" fill="#a5a5a5"/>
<rect x="871.0" y="506.7" width="1" height="2" fill="#a5a5a5"/>
<rect x="871.0" y="580.6" width="1" height="2" fill="#a5a5a5"/>
<rect x="944.9" y="137.2" width="1" height="2" fill="#a5a5a5"/>
<rect x="944.9" y="211.1" width="1" height="2" fill="#a5a5a5"/>
<rect x="944.9" y="285.0" width="1" height="2" fill="#a5a5a5"/>
<rect x="944.9" y="358.9" width="1" height="2" fill="#a5a5a5"/>
<rect x="944.9" y="432.8" width="1" height="2" fill="#a5a5a5"/>
<rect x="944.9" y="506.7" width="1" height="2" fill="#a5a5a5"/>
<rect x="944.9" y="580.6" width="1" height="2" fill="#a5a5a5"/>
<rect x="574" y="580" width="3" height="3" fill="#9a9a9a"/>
<circle cx="235.4" cy="190.5" r="7.05" fill="none" stroke="#840000" stroke-width="7.1"/>
<circle cx="605.4" cy="182.3" r="7.05" fill="none" stroke="#840000" stroke-width="7.1"/>
<circle cx="235.4" cy="537.4" r="7.05" fill="none" stroke="#840000" stroke-width="7.1"/>
<circle cx="612.6" cy="530.4" r="7.05" fill="none" stroke="#840000" stroke-width="7.1"/>
<path d="M250.5,331 V293.4 H391.8 M331.5,293.4 V426.3 H398.8 M449.8,293.4 H479.4 M479.4,264.4 V323.4 M479.4,264.4 H525.1 M479.4,323.4 H525.1 M456.8,426.3 H525.1" fill="none" stroke="#009600" stroke-width="1.4"/>
<circle cx="331.5" cy="293.4" r="2.8" fill="#009600"/><circle cx="479.4" cy="293.4" r="2.8" fill="#009600"/>
<path d="M391.8,293.4 H405.3 M435.8,293.4 H449.8 M405,286.3 H435.8 M420.6,275 V286.3" fill="none" stroke="#840000" stroke-width="1.3"/><circle cx="408.5" cy="293.4" r="3" fill="none" stroke="#840000" stroke-width="1.3"/><circle cx="432.6" cy="293.4" r="3" fill="none" stroke="#840000" stroke-width="1.3"/>
<path d="M399.8,426.5 H413.3 M443.8,426.5 H457.8 M413,419.4 H443.8 M428.6,408.1 V419.4" fill="none" stroke="#840000" stroke-width="1.3"/><circle cx="416.5" cy="426.5" r="3" fill="none" stroke="#840000" stroke-width="1.3"/><circle cx="440.6" cy="426.5" r="3" fill="none" stroke="#840000" stroke-width="1.3"/>
<path d="M525.1,264.4 H566.4 M538.6,256.7 V271.7 L552.8,264.4 Z M553.4,256.2 V272.0" fill="none" stroke="#840000" stroke-width="1.3"/><path d="M556.3,268.0 L565.6,277.5 M561.1,277.5 H565.6 V272.4 M564.4,268.0 L572.7,277.5 M568.3,277.5 H572.7 V272.4" fill="none" stroke="#840000" stroke-width="1.3"/><circle cx="568.3" cy="264.4" r="1.9" fill="none" stroke="#840000" stroke-width="0.7"/><path d="M567.0,263.09999999999997 l2.6,2.6 M567.0,265.7 l2.6,-2.6" stroke="#840000" stroke-width="0.6"/>
<path d="M525.1,323.4 H566.4 M538.6,315.7 V330.7 L552.8,323.4 Z M553.4,315.2 V331.0" fill="none" stroke="#840000" stroke-width="1.3"/><path d="M556.3,327.0 L565.6,336.5 M561.1,336.5 H565.6 V331.4 M564.4,327.0 L572.7,336.5 M568.3,336.5 H572.7 V331.4" fill="none" stroke="#840000" stroke-width="1.3"/><circle cx="568.3" cy="323.4" r="1.9" fill="none" stroke="#840000" stroke-width="0.7"/><path d="M567.0,322.09999999999997 l2.6,2.6 M567.0,324.7 l2.6,-2.6" stroke="#840000" stroke-width="0.6"/>
<path d="M525.1,426.3 H566.4 M538.6,418.6 V433.6 L552.8,426.3 Z M553.4,418.1 V433.90000000000003" fill="none" stroke="#840000" stroke-width="1.3"/><path d="M556.3,429.90000000000003 L565.6,439.40000000000003 M561.1,439.40000000000003 H565.6 V434.3 M564.4,429.90000000000003 L572.7,439.40000000000003 M568.3,439.40000000000003 H572.7 V434.3" fill="none" stroke="#840000" stroke-width="1.3"/><circle cx="568.3" cy="426.3" r="1.9" fill="none" stroke="#840000" stroke-width="0.7"/><path d="M567.0,425.0 l2.6,2.6 M567.0,427.6 l2.6,-2.6" stroke="#840000" stroke-width="0.6"/>
<path d="M250.5,331 V349 M250.5,358 V367 M250.5,375 V387.6 M255,342.6 H261.6 M258.3,339.3 V345.9" fill="none" stroke="#840000" stroke-width="1.3"/>
<rect x="237" y="348.9" width="27" height="3" fill="#840000"/><rect x="240.9" y="354.1" width="19.2" height="3.9" fill="#840000"/><rect x="237" y="367" width="27" height="3.1" fill="#840000"/><rect x="240.9" y="371.1" width="19.2" height="3.9" fill="#840000"/>
<circle cx="250.5" cy="389.5" r="1.9" fill="none" stroke="#840000" stroke-width="0.7"/><path d="M249.2,388.2 l2.6,2.6 M249.2,390.8 l2.6,-2.6" stroke="#840000" stroke-width="0.6"/>
<text x="252.9" y="186.9" textLength="11.9" lengthAdjust="spacingAndGlyphs" font-family="Liberation Mono" font-size="12.3" fill="#006464">H1</text>
<text x="252.9" y="201.4" textLength="72.0" lengthAdjust="spacingAndGlyphs" font-family="Liberation Mono" font-size="12.3" fill="#006464">MountingHole</text>
<text x="621.6" y="179.1" textLength="13.7" lengthAdjust="spacingAndGlyphs" font-family="Liberation Mono" font-size="12.3" fill="#006464">H2</text>
<text x="621.6" y="194.6" textLength="72.6" lengthAdjust="spacingAndGlyphs" font-family="Liberation Mono" font-size="12.3" fill="#006464">MountingHole</text>
<text x="252.7" y="534.1" textLength="11.9" lengthAdjust="spacingAndGlyphs" font-family="Liberation Mono" font-size="12.3" fill="#006464">H3</text>
<text x="252.7" y="549.3" textLength="72.2" lengthAdjust="spacingAndGlyphs" font-family="Liberation Mono" font-size="12.3" fill="#006464">MountingHole</text>
<text x="629.8" y="527.2" textLength="13.7" lengthAdjust="spacingAndGlyphs" font-family="Liberation Mono" font-size="12.3" fill="#006464">H4</text>
<text x="629.8" y="541.3" textLength="72.2" lengthAdjust="spacingAndGlyphs" font-family="Liberation Mono" font-size="12.3" fill="#006464">MountingHole</text>
<text x="274.4" y="353.3" textLength="18.6" lengthAdjust="spacingAndGlyphs" font-family="Liberation Mono" font-size="12.3" fill="#006464">BT1</text>
<text x="274.4" y="368.3" textLength="37.5" lengthAdjust="spacingAndGlyphs" font-family="Liberation Mono" font-size="12.3" fill="#006464">Battery</text>
<text x="409.6" y="253.3" textLength="21.4" lengthAdjust="spacingAndGlyphs" font-family="Liberation Mono" font-size="12.3" fill="#006464">SW1</text>
<text x="397.8" y="268.3" textLength="45.6" lengthAdjust="spacingAndGlyphs" font-family="Liberation Mono" font-size="12.3" fill="#006464">SW_Push</text>
<text x="417.3" y="386.6" textLength="21.5" lengthAdjust="spacingAndGlyphs" font-family="Liberation Mono" font-size="12.3" fill="#006464">SW2</text>
<text x="404.8" y="401.6" textLength="47.1" lengthAdjust="spacingAndGlyphs" font-family="Liberation Mono" font-size="12.3" fill="#006464">SW_Push</text>
<text x="549.7" y="231.3" textLength="12.3" lengthAdjust="spacingAndGlyphs" font-family="Liberation Mono" font-size="12.3" fill="#006464">D1</text>
<text x="546.6" y="246.1" textLength="18.4" lengthAdjust="spacingAndGlyphs" font-family="Liberation Mono" font-size="12.3" fill="#006464">LED</text>
<text x="549.7" y="290.2" textLength="12.3" lengthAdjust="spacingAndGlyphs" font-family="Liberation Mono" font-size="12.3" fill="#006464">D2</text>
<text x="546.6" y="305.1" textLength="18.4" lengthAdjust="spacingAndGlyphs" font-family="Liberation Mono" font-size="12.3" fill="#006464">LED</text>
<text x="549.7" y="394.2" textLength="12.8" lengthAdjust="spacingAndGlyphs" font-family="Liberation Mono" font-size="12.3" fill="#006464">D3</text>
<text x="546.2" y="408.3" textLength="19.3" lengthAdjust="spacingAndGlyphs" font-family="Liberation Mono" font-size="12.3" fill="#006464">LED</text>
</g>
<line x1="743" y1="416.9" x2="937" y2="485.6" stroke="#ff0000" stroke-width="2.2"/>
<path d="M957.8,492.4 L939.8,479.2 L934.9,492.2 Z" fill="#ff0000"/>
</svg><!--/SVG-->
</body></html>
